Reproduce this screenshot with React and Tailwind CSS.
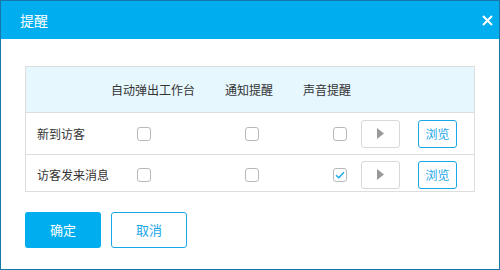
import React from "react";

const font = { fontFamily: '"Noto Sans CJK SC", "Noto Sans", sans-serif' };

function Box({ checked }) {
  return (
    <div className="w-[14px] h-[14px] shrink-0 rounded-[3px] border border-[#b9b9b9] bg-white flex items-center justify-center">
      {checked && (
        <svg width="10" height="8" viewBox="0 0 10 8">
          <path d="M1 4.2 L3.8 6.8 L9 1.2" fill="none" stroke="#1aa7e8" strokeWidth="1.4" />
        </svg>
      )}
    </div>
  );
}

function Row({ label, checked, last }) {
  return (
    <div className={"flex items-center " + (last ? "h-[36px] pt-[3px]" : "h-[42px] border-b border-[#dddddd]")}>
      <div className="w-[111px] pl-[11px] text-[12px] text-[#333]">{label}</div>
      <Box />
      <div className="w-[94px]" />
      <Box />
      <div className="w-[74px]" />
      <Box checked={checked} />
      <div className="ml-[14px] w-[39px] h-[28px] rounded-[3px] border border-[#d9d9d9] bg-white flex items-center justify-center">
        <svg width="7" height="11" viewBox="0 0 7 11">
          <path d="M0 0 L7 5.5 L0 11 Z" fill="#999" />
        </svg>
      </div>
      <div className="ml-[18px] w-[39px] h-[28px] rounded-[3px] border border-[#1aa7e8] bg-white flex items-center justify-center text-[12px] text-[#1aa7e8]">
        浏览
      </div>
    </div>
  );
}

export default function App() {
  return (
    <div style={font} className="w-[500px] h-[270px] border border-[#1677a8] bg-white flex flex-col">
      <div className="h-[38px] bg-[#00aeef] flex items-center justify-between pl-[19px] pr-[6px]">
        <span className="text-[14px] text-white">提醒</span>
        <svg width="11" height="11" viewBox="0 0 11 11">
          <path d="M1 1 L10 10 M10 1 L1 10" stroke="white" strokeWidth="2" />
        </svg>
      </div>
      <div className="px-[24px] pt-[27px]">
        <div className="border border-[#dddddd]">
          <div className="h-[46px] bg-[#e6f7fe] border-b border-[#dddddd] flex items-center text-[12px] text-[#333]">
            <span className="ml-[85px]">自动弹出工作台</span>
            <span className="ml-[30px]">通知提醒</span>
            <span className="ml-[30px]">声音提醒</span>
          </div>
          <Row label="新到访客" />
          <Row label="访客发来消息" checked last />
        </div>
        <div className="flex gap-[10px] mt-[20px]">
          <div className="w-[76px] h-[36px] rounded-[3px] bg-[#00aeef] text-white text-[13px] flex items-center justify-center">
            确定
          </div>
          <div className="w-[76px] h-[36px] rounded-[3px] border border-[#1aa7e8] text-[#1aa7e8] text-[13px] flex items-center justify-center">
            取消
          </div>
        </div>
      </div>
    </div>
  );
}
